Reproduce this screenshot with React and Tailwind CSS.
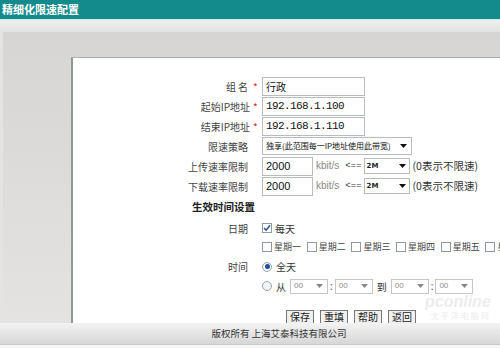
import React from "react";

const cjk = { fontFamily: '"Noto Sans CJK SC", "Noto Sans", sans-serif' };

function Arrow({ color = "#111" }) {
  return (
    <svg width="7" height="4" viewBox="0 0 7 4" className="shrink-0">
      <path d="M0 0 H7 L3.5 4 Z" fill={color} />
    </svg>
  );
}

function Checkbox({ checked }) {
  return (
    <div className="w-[10px] h-[10px] border border-[#8e9aa6] bg-white flex items-center justify-center shrink-0">
      {checked && (
        <svg width="8" height="8" viewBox="0 0 8 8">
          <path d="M1 4 L3.2 6.2 L7 1.2" stroke="#2b4e8c" strokeWidth="1.5" fill="none" />
        </svg>
      )}
    </div>
  );
}

function Radio({ checked }) {
  return (
    <div className="w-[10px] h-[10px] rounded-full border border-[#9aa3ad] bg-[#f2f4f6] flex items-center justify-center shrink-0">
      {checked && <div className="w-[5px] h-[5px] rounded-full bg-[#1f4f9a]" />}
    </div>
  );
}

function TimeSel() {
  return (
    <div className="w-[38px] h-[15px] border border-[#c4c7ca] bg-white flex items-center justify-between pl-[3px] pr-[4px]">
      <span className="text-[8px] text-[#888] leading-none" style={{ fontFamily: '"Liberation Sans", sans-serif' }}>00</span>
      <Arrow color="#888" />
    </div>
  );
}

function Label({ children, star }) {
  return (
    <div className="w-[189px] shrink-0 flex justify-end items-center text-[10px] text-[#444] pr-[3px]" style={cjk}>
      <span>{children}</span>
      {star ? <span className="text-[#d22] ml-[3px] w-[6px]">*</span> : <span className="w-[11px]" />}
    </div>
  );
}

function RateRow({ label }) {
  return (
    <div className="h-[20px] flex items-center">
      <Label>{label}</Label>
      <div className="w-[51px] h-[19px] border border-[#b7bcc0] bg-white flex items-center pl-[3px] text-[11px] text-[#111]" style={{ fontFamily: '"Liberation Sans", sans-serif' }}>2000</div>
      <span className="ml-[3px] text-[10px] text-[#888] leading-none" style={{ fontFamily: '"Liberation Sans", sans-serif' }}>kbit/s</span>
      <span className="ml-[6px] text-[9px] text-[#333] leading-none" style={{ fontFamily: '"Liberation Mono", monospace' }}>&lt;==</span>
      <div className="ml-[2px] w-[46px] h-[16px] border border-[#b7bcc0] bg-white flex items-center justify-between pl-[2px] pr-[3px]">
        <span className="text-[7px] font-bold text-[#222] leading-none" style={{ fontFamily: '"DejaVu Sans", sans-serif' }}>2M</span>
        <Arrow />
      </div>
      <span className="ml-[3px] text-[10.5px] text-[#333] leading-none" style={cjk}>(0表示不限速)</span>
    </div>
  );
}

function Btn({ children }) {
  return (
    <div className="h-[18px] px-[3px] border border-[#777] bg-[#f0f0f0] text-[10px] text-[#222] flex items-start pt-[1px] leading-none" style={cjk}>
      {children}
    </div>
  );
}

export default function App() {
  const mono = { fontFamily: '"Liberation Mono", monospace', letterSpacing: "-0.6px" };
  return (
    <div className="w-[500px] h-[348px] flex flex-col overflow-hidden bg-white">
      <div className="h-[19px] bg-[#138a8c] flex items-center pl-[2px] shrink-0">
        <span className="text-white font-bold text-[11px] leading-none" style={{ fontFamily: '"Noto Sans CJK SC", sans-serif' }}>精细化限速配置</span>
      </div>
      <div className="h-[1px] bg-[#cfe9e9] shrink-0" />
      <div className="h-[12px] bg-gradient-to-b from-[#efefef] to-[#e2e2e2] shrink-0" />
      <div className="h-[291px] flex shrink-0 bg-[#e4e3e1] overflow-hidden">
        <div className="flex-1 ml-[3px] flex flex-col pt-[25px] bg-gradient-to-b from-[#d6d5d3] to-[#e4e3e1]">
          <div className="flex-1 ml-[68px] bg-white border-l-2 border-t border-l-[#8c9a9a] border-t-[#a9b3b3] relative overflow-hidden">
            <div className="absolute left-[352px] top-[236px] flex flex-col items-end pointer-events-none">
              <span className="text-[16px] italic font-bold text-[#ededed] leading-none" style={{ fontFamily: '"Liberation Sans", sans-serif' }}>pconline</span>
              <span className="text-[8px] text-[#ececec] leading-none tracking-[2px] mt-[2px]" style={cjk}>太平洋电脑网</span>
            </div>
            <div className="relative flex flex-col pt-[18px]">
              <div className="h-[20px] flex items-center">
                <Label star><span className="tracking-[2px]">组名</span></Label>
                <div className="w-[103px] h-[19px] border border-[#b7bcc0] bg-white flex items-center pl-[3px] text-[10px] text-[#111]" style={cjk}>行政</div>
              </div>
              <div className="h-[20px] flex items-center">
                <Label star>起始IP地址</Label>
                <div className="w-[103px] h-[19px] border border-[#b7bcc0] bg-white flex items-center pl-[3px] text-[11px] text-[#111]" style={mono}>192.168.1.100</div>
              </div>
              <div className="h-[20px] flex items-center">
                <Label star>结束IP地址</Label>
                <div className="w-[103px] h-[19px] border border-[#b7bcc0] bg-white flex items-center pl-[3px] text-[11px] text-[#111]" style={mono}>192.168.1.110</div>
              </div>
              <div className="h-[20px] flex items-center">
                <Label>限速策略</Label>
                <div className="w-[150px] h-[18px] border border-[#b7bcc0] bg-white flex items-center justify-between pl-[3px] pr-[4px]">
                  <span className="text-[8px] text-[#111] leading-none whitespace-nowrap" style={cjk}>独享(此范围每一IP地址使用此带宽)</span>
                  <Arrow />
                </div>
              </div>
              <RateRow label="上传速率限制" />
              <RateRow label="下载速率限制" />
              <div className="h-[22px] flex items-center pl-[119px]">
                <span className="text-[10.5px] font-bold text-[#222]" style={cjk}>生效时间设置</span>
              </div>
              <div className="h-[20px] flex items-center">
                <Label>日期</Label>
                <Checkbox checked />
                <span className="ml-[3px] text-[10px] text-[#333]" style={cjk}>每天</span>
              </div>
              <div className="h-[18px] flex items-center pl-[189px]">
                {["星期一", "星期二", "星期三", "星期四", "星期五", "星期六"].map((d) => (
                  <div key={d} className="w-[44.7px] shrink-0 flex items-center">
                    <Checkbox />
                    <span className="ml-[2px] text-[9px] text-[#444] whitespace-nowrap" style={cjk}>{d}</span>
                  </div>
                ))}
              </div>
              <div className="h-[21px] flex items-center">
                <Label>时间</Label>
                <Radio checked />
                <span className="ml-[4px] text-[10px] text-[#333]" style={cjk}>全天</span>
              </div>
              <div className="h-[18px] flex items-center pl-[189px]">
                <Radio />
                <span className="ml-[4px] mr-[4px] text-[10px] text-[#333]" style={cjk}>从</span>
                <TimeSel />
                <span className="mx-[2px] text-[10px] text-[#555]">:</span>
                <TimeSel />
                <span className="mx-[4px] text-[10px] text-[#333]" style={cjk}>到</span>
                <TimeSel />
                <span className="mx-[2px] text-[10px] text-[#555]">:</span>
                <TimeSel />
              </div>
              <div className="mt-[15px] flex items-start gap-[6px] pl-[213px]">
                <Btn>保存</Btn>
                <Btn>重填</Btn>
                <Btn>帮助</Btn>
                <Btn>返回</Btn>
              </div>
            </div>
          </div>
        </div>
      </div>
      <div className="h-[22px] shrink-0 bg-gradient-to-b from-[#f3f3f3] to-[#d7d7d7] border-b border-[#c9c9c9] flex items-center justify-center">
        <span className="text-[9.5px] text-[#333] ml-[58px]" style={cjk}>版权所有 上海艾泰科技有限公司</span>
      </div>
      <div className="flex-1 bg-[#f7f7f7]" />
    </div>
  );
}
